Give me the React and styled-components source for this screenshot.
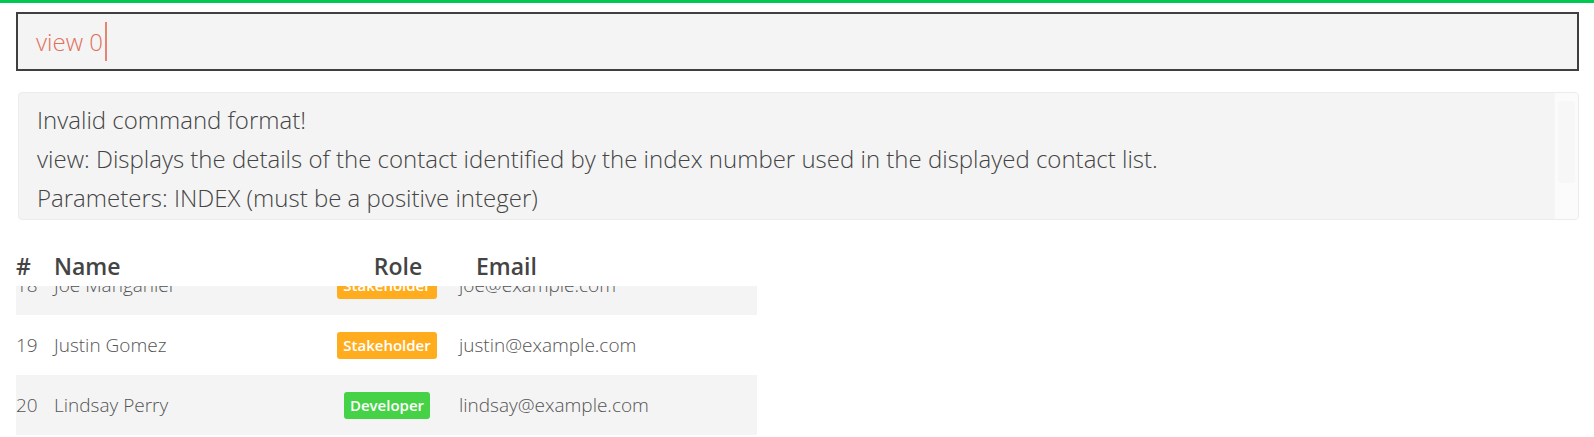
import React from "react"
import styled, { createGlobalStyle } from 'styled-components'

const Colors = {
  green: '#00c853',
  panel: '#f4f4f4',
  border: '#3f3f3f',
  command: '#e0705a',
  text: '#444444',
  muted: '#555555',
  orange: '#ffad1f',
  lime: '#46d246'
}

const GlobalStyle = createGlobalStyle`
  html, body {
    margin: 0;
    padding: 0;
    background: #ffffff;
    font-family: "Open Sans", "Noto Sans", sans-serif;
  }
  * { box-sizing: border-box; }
`

const Page = styled.div`
  display: flex;
  flex-direction: column;
  height: 100vh;
  overflow: hidden;
`

const TopBar = styled.div`
  height: 3px;
  flex: none;
  background: ${Colors.green};
`

const Main = styled.main`
  flex: 1;
  min-height: 0;
  display: flex;
  flex-direction: column;
  padding: 9px 16px 2px 16px;
`

const CommandBox = styled.div`
  height: 59px;
  flex: none;
  margin-right: -1px;
  display: flex;
  align-items: center;
  padding-left: 18px;
  background: ${Colors.panel};
  border: 2px solid ${Colors.border};
  font-size: 24px;
  font-weight: 300;
  color: ${Colors.command};
`

const Caret = styled.span`
  display: inline-block;
  width: 2px;
  height: 39px;
  margin-left: 2px;
  background: ${Colors.command};
  opacity: 0.85;
`

const ResultBox = styled.div`
  margin: 21px -1px 0 2px;
  height: 128px;
  flex: none;
  display: flex;
  background: ${Colors.panel};
  border: 1px solid #ececec;
  border-radius: 4px;
  overflow: hidden;
`

const ResultText = styled.div`
  flex: 1;
  padding: 7px 18px 0 18px;
  font-size: 24px;
  font-weight: 300;
  line-height: 39px;
  white-space: nowrap;
  color: ${Colors.text};
`

const Track = styled.div`
  width: 24px;
  flex: none;
  background: #fbfbfb;
  border-left: 1px solid #f6f6f6;
  padding: 8px 3px;
`

const Thumb = styled.div`
  height: 82px;
  border-radius: 4px;
  background: #f7f7f7;
`

const Table = styled.section`
  margin-top: 26px;
  width: 741px;
  flex: 1;
  min-height: 0;
  display: flex;
  flex-direction: column;
`

const HeaderRow = styled.div`
  display: grid;
  grid-template-columns: 38px 273px 142px 1fr;
  align-items: center;
  height: 40px;
  flex: none;
  font-size: 23px;
  font-weight: 600;
  color: ${Colors.text};
`

const HeaderCell = styled.div`
  text-align: ${props => props.center ? 'center' : 'left'};
  padding-left: ${props => props.indent || 0}px;
`

const Viewport = styled.div`
  flex: 1;
  min-height: 0;
  overflow: hidden;
  display: flex;
  flex-direction: column;
  justify-content: flex-end;
`

const Row = styled.div`
  display: grid;
  grid-template-columns: 38px 273px 120px 1fr;
  align-items: center;
  height: 60px;
  flex: none;
  background: ${props => props.striped ? Colors.panel : '#ffffff'};
  font-size: 19px;
  font-weight: 300;
  color: ${Colors.muted};
`

const Cell = styled.div`
  white-space: nowrap;
  padding-left: ${props => props.indent || 0}px;
  text-align: ${props => props.center ? 'center' : 'left'};
`

const Badge = styled.span`
  display: inline-block;
  height: 27px;
  line-height: 27px;
  padding: 0 6px;
  border-radius: 3px;
  font-size: 15px;
  font-weight: 600;
  color: #ffffff;
  background: ${props => props.role === 'Developer' ? Colors.lime : Colors.orange};
`

const contacts = [
  { id: 18, name: 'Joe Manganiel', role: 'Stakeholder', email: 'joe@example.com' },
  { id: 19, name: 'Justin Gomez', role: 'Stakeholder', email: 'justin@example.com' },
  { id: 20, name: 'Lindsay Perry', role: 'Developer', email: 'lindsay@example.com' }
]

function App () {
  return (
    <Page>
      <GlobalStyle />
      <TopBar />
      <Main>
        <CommandBox>
          view 0<Caret />
        </CommandBox>
        <ResultBox>
          <ResultText>
            Invalid command format!<br />
            view: Displays the details of the contact identified by the index number used in the displayed contact list.<br />
            Parameters: INDEX (must be a positive integer)
          </ResultText>
          <Track><Thumb /></Track>
        </ResultBox>
        <Table>
          <HeaderRow>
            <HeaderCell>#</HeaderCell>
            <HeaderCell>Name</HeaderCell>
            <HeaderCell center>Role</HeaderCell>
            <HeaderCell indent={7}>Email</HeaderCell>
          </HeaderRow>
          <Viewport>
            {contacts.map(c => (
              <Row key={`c:${c.id}`} striped={c.id % 2 === 0}>
                <Cell>{c.id}</Cell>
                <Cell>{c.name}</Cell>
                <Cell center><Badge role={c.role}>{c.role}</Badge></Cell>
                <Cell indent={12}>{c.email}</Cell>
              </Row>
            ))}
          </Viewport>
        </Table>
      </Main>
    </Page>
  )
}

export default App
